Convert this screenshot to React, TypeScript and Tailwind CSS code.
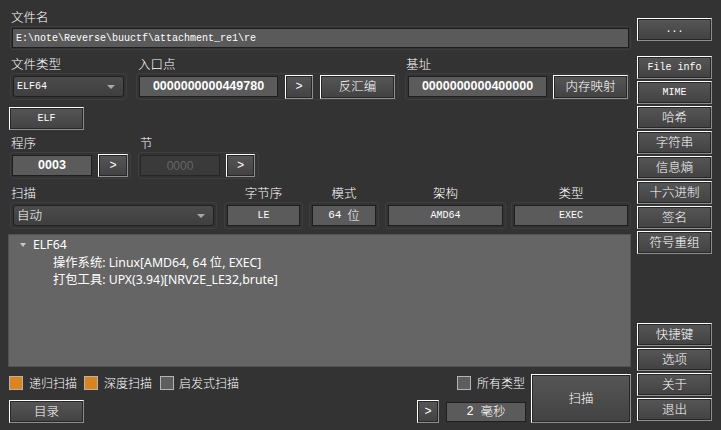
import React from "react";

const btn =
  "flex items-center justify-center border border-t-white border-l-white border-r-[#8e8e8e] border-b-[#8e8e8e] bg-linear-to-b from-[#565656] to-[#424242] shadow-[inset_0_0_0_1px_#272727] text-white";
const frame = "rounded-[3px] border border-[#3e3e3e] flex items-center";
const field = "bg-[#5b5b5b] border border-[#1f1f1f] flex items-center justify-center";
const mono = "font-['Liberation_Mono','Noto_Sans_CJK_SC',monospace]";
const cjk = "font-['Noto_Sans_CJK_SC','Noto_Sans',sans-serif] font-light";
const bold = "font-['Liberation_Sans',sans-serif] font-bold text-[12.5px]";

function Arrow() {
  return (
    <div className="w-0 h-0 border-l-[4px] border-r-[4px] border-t-[4px] border-l-transparent border-r-transparent border-t-[#a8a8a8]" />
  );
}

function Combo({ text, className }: { text: string; className: string }) {
  return (
    <div
      className={`h-[21px] rounded-[3px] border border-[#202020] bg-linear-to-b from-[#4b4b4b] to-[#3f3f3f] flex items-center justify-between pl-[3px] pr-[8px] ${className}`}
    >
      {text}
      <Arrow />
    </div>
  );
}

function Check({ on }: { on: boolean }) {
  return (
    <div
      className={`w-[14px] h-[14px] border border-[#b4b4b4] ${on ? "bg-[#d9841f]" : "bg-[#5e5e5e]"}`}
    />
  );
}

export default function App() {
  const sideTop = ["File info", "MIME", "哈希", "字符串", "信息熵", "十六进制", "签名", "符号重组"];
  const sideBottom = ["快捷键", "选项", "关于", "退出"];

  return (
    <div className={`w-[721px] h-[430px] bg-[#333333] flex pl-[8px] pt-[8px] gap-[6px] overflow-hidden text-white ${cjk}`}>
      {/* Left area */}
      <div className="w-[623px] flex flex-col">
        <div className="h-[18px] pl-[3px] text-[12.5px] leading-[18px]">文件名</div>
        <div className={`${frame} ml-[2px] w-[621px] h-[24px] p-px`}>
          <div className={`h-full w-full bg-[#5a5a5a] border border-[#1e1e1e] flex items-center pl-[3px] text-[10px] ${mono}`}>
            E:\note\Reverse\buuctf\attachment_re1\re
          </div>
        </div>

        {/* type / entry / base */}
        <div className="h-[23px] flex items-end text-[12.5px] leading-[18px]">
          <div className="w-[130px] pl-[3px]">文件类型</div>
          <div className="w-[268px]">入口点</div>
          <div>基址</div>
        </div>
        <div className="h-[27px] flex">
          <div className={`${frame} ml-[2px] w-[117px] px-[2px]`}>
            <Combo text="ELF64" className={`w-full text-[10px] ${mono}`} />
          </div>
          <div className={`${frame} ml-[9px] w-[263px] pl-[2px]`}>
            <div className={`${field} w-[139px] h-[21px] ${bold}`}>0000000000449780</div>
            <div className={`${btn} ml-[7px] w-[28px] h-[24px] text-[12px] ${mono}`}>&gt;</div>
            <div className={`${btn} ml-[7px] w-[75px] h-[24px] text-[12.5px]`}>反汇编</div>
          </div>
          <div className={`${frame} ml-[6px] w-[225px] pl-[2px]`}>
            <div className={`${field} w-[139px] h-[21px] ${bold}`}>0000000000400000</div>
            <div className={`${btn} ml-[6px] w-[75px] h-[24px] text-[12.5px]`}>内存映射</div>
          </div>
        </div>

        <div className={`${btn} mt-[7px] ml-[1px] w-[75px] h-[23px] text-[10px] ${mono}`}>ELF</div>

        {/* program / section */}
        <div className="h-[22px] flex items-end text-[12.5px] leading-[18px]">
          <div className="w-[132px] pl-[3px]">程序</div>
          <div>节</div>
        </div>
        <div className="h-[27px] flex">
          <div className={`${frame} ml-[2px] w-[121px] pl-[1px]`}>
            <div className={`${field} w-[80px] h-[21px] ${bold}`}>0003</div>
            <div className={`${btn} ml-[6px] w-[30px] h-[23px] text-[12px] ${mono}`}>&gt;</div>
          </div>
          <div className={`${frame} ml-[7px] w-[121px] pl-[1px]`}>
            <div className="w-[80px] h-[21px] bg-[#3a3a3a] border border-[#262626] flex items-center justify-center text-[#666] font-['Liberation_Sans',sans-serif] text-[12px]">
              0000
            </div>
            <div className={`${btn} ml-[6px] w-[29px] h-[23px] text-[12px] ${mono}`}>&gt;</div>
          </div>
        </div>

        {/* scan row */}
        <div className="h-[23px] flex items-end text-[12.5px] leading-[18px]">
          <div className="w-[216px] pl-[3px]">扫描</div>
          <div className="w-[79px] text-center">字节序</div>
          <div className="ml-[6px] w-[70px] text-center">模式</div>
          <div className="ml-[6px] w-[121px] text-center">架构</div>
          <div className="ml-[5px] w-[120px] text-center">类型</div>
        </div>
        <div className={`h-[27px] flex text-[10px] ${mono}`}>
          <div className={`${frame} ml-[2px] w-[207px] px-[2px]`}>
            <Combo text="自动" className={`w-full text-[12.5px] ${cjk}`} />
          </div>
          <div className={`${frame} ml-[7px] w-[79px] px-[2px]`}>
            <div className={`${field} w-full h-[21px]`}>LE</div>
          </div>
          <div className={`${frame} ml-[6px] w-[70px] px-[2px]`}>
            <div className={`${field} w-full h-[21px] gap-[6px] text-[11px]`}>
              64 <span className={`text-[12.5px] ${cjk}`}>位</span>
            </div>
          </div>
          <div className={`${frame} ml-[6px] w-[121px] px-[2px]`}>
            <div className={`${field} w-full h-[21px]`}>AMD64</div>
          </div>
          <div className={`${frame} ml-[5px] w-[120px] px-[2px]`}>
            <div className={`${field} w-full h-[21px]`}>EXEC</div>
          </div>
        </div>

        {/* result tree */}
        <div className="mt-[5px] w-[623px] h-[133px] bg-[#656565] border border-[#525252] pt-px text-[12.3px] leading-[17.5px] font-['Noto_Sans','Noto_Sans_CJK_SC',sans-serif] font-normal">
          <div className="flex items-center h-[17.5px]">
            <div className="ml-[8px] w-[12px] flex justify-center">
              <div className="w-0 h-0 border-l-[3px] border-r-[3px] border-t-[4px] border-l-transparent border-r-transparent border-t-[#c8c8c8]" />
            </div>
            <span className="ml-[4px]">ELF64</span>
          </div>
          <div className="pl-[44px]">操作系统: Linux[AMD64, 64 位, EXEC]</div>
          <div className="pl-[44px]">打包工具: UPX(3.94)[NRV2E_LE32,brute]</div>
        </div>

        {/* bottom */}
        <div className="mt-[5px] flex">
          <div className="w-[523px] flex flex-col">
            <div className="h-[22px] flex items-center text-[12px]">
              <div className="ml-[1px] w-[75px] flex items-center">
                <Check on />
                <span className="ml-[6px]">递归扫描</span>
              </div>
              <div className="w-[76px] flex items-center">
                <Check on />
                <span className="ml-[6px]">深度扫描</span>
              </div>
              <div className="flex items-center">
                <Check on={false} />
                <span className="ml-[5px]">启发式扫描</span>
              </div>
              <div className="ml-auto mr-[6px] flex items-center">
                <Check on={false} />
                <span className="ml-[6px]">所有类型</span>
              </div>
            </div>
            <div className="mt-[6px] h-[23px] flex items-center">
              <div className={`${btn} ml-[1px] w-[75px] h-[23px] text-[12.5px]`}>目录</div>
              <div className={`${btn} ml-auto w-[22px] h-[23px] text-[12px] ${mono}`}>&gt;</div>
              <div className={`${field} ml-[7px] mr-[5px] w-[80px] h-[20px] gap-[7px] text-[12px] ${mono}`}>
                2 <span className={`text-[12.5px] ${cjk}`}>毫秒</span>
              </div>
            </div>
          </div>
          <div className={`${btn} mt-[2px] w-[100px] h-[49px] text-[12.5px]`}>扫描</div>
        </div>
      </div>

      {/* Right column */}
      <div className="w-[75px] flex flex-col pt-[10px]">
        <div className={`${btn} h-[23px] text-[10px] ${mono}`}>...</div>
        <div className="mt-[15px] flex flex-col gap-[2px]">
          {sideTop.map((t) => (
            <div
              key={t}
              className={`${btn} h-[23px] ${/^[A-Za-z ]+$/.test(t) ? `text-[10px] ${mono}` : "text-[12.5px]"}`}
            >
              {t}
            </div>
          ))}
        </div>
        <div className="mt-[69px] flex flex-col gap-[2px]">
          {sideBottom.map((t) => (
            <div key={t} className={`${btn} h-[23px] text-[12.5px]`}>
              {t}
            </div>
          ))}
        </div>
      </div>
    </div>
  );
}
